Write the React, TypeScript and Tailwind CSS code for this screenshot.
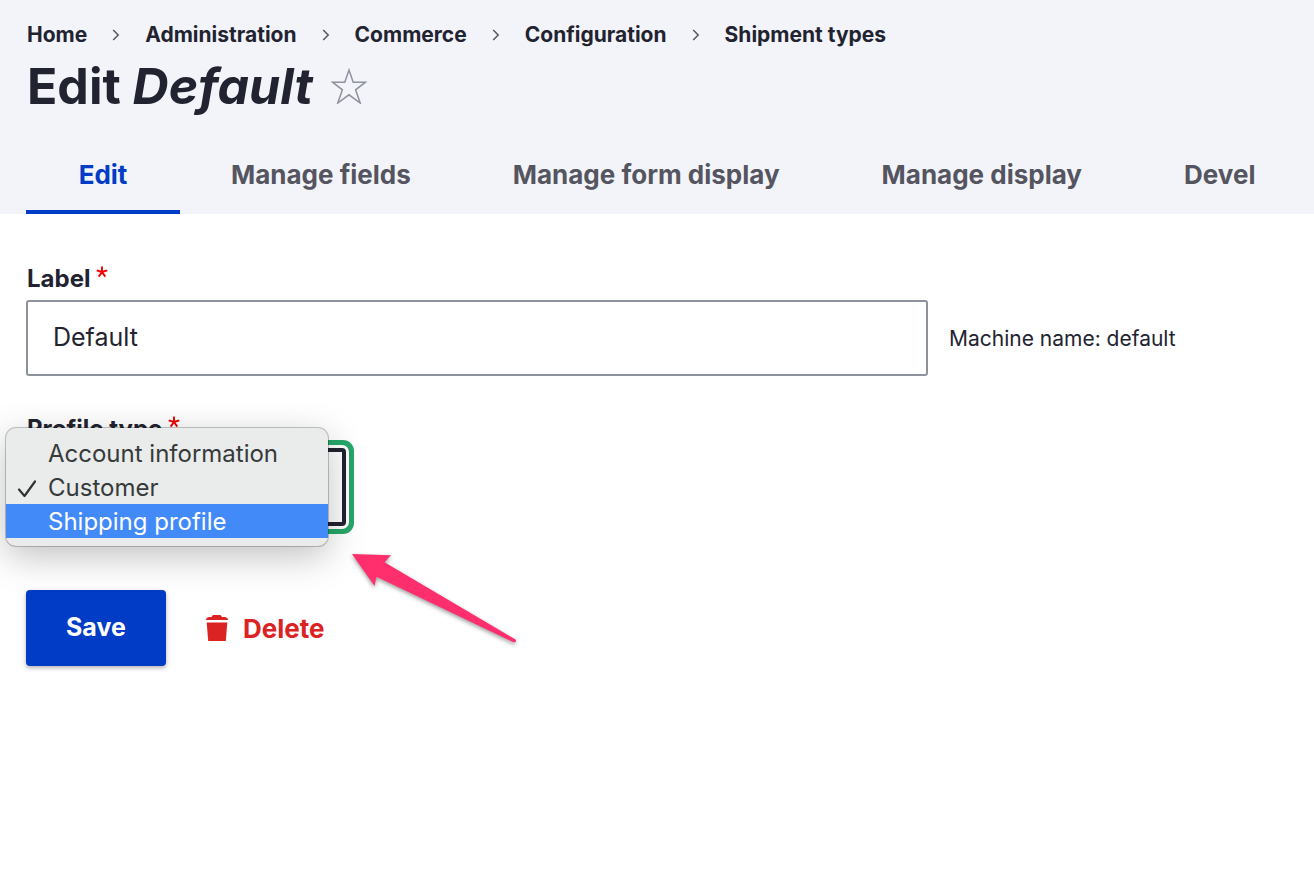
import { Fragment } from "react";

const crumbs = ["Home", "Administration", "Commerce", "Configuration", "Shipment types"];
const tabs = ["Edit", "Manage fields", "Manage form display", "Manage display", "Devel"];
const profileTypes = ["Account information", "Customer", "Shipping profile"];

function Chevron() {
  return (
    <svg className="h-3 w-2 shrink-0" viewBox="0 0 8 12" fill="none" stroke="#55565f" strokeWidth="1.5" aria-hidden="true">
      <path d="M1.2 1 6.2 6 1.2 11" />
    </svg>
  );
}

function Star() {
  return (
    <svg className="size-9" viewBox="0 0 36 36" fill="none" stroke="#8e929c" strokeWidth="1.5" aria-hidden="true">
      <path d="M18 2 22.2 14.2H34.5L24.6 21.8 29.2 35 18 26.8 6.8 35 11.4 21.8 1.5 14.2H13.8Z" />
    </svg>
  );
}

function Trash() {
  return (
    <svg className="h-[26px] w-6 shrink-0" viewBox="0 0 24 26" fill="#dc2323" aria-hidden="true">
      <path d="M8 0H15.5L17 2H20Q23 2.500 23 5H1Q1 2.500 4 2H6.500Z" />
      <path d="M1.700 7.500H22.300L20.800 26H3.200Z" />
    </svg>
  );
}

function Required() {
  return (
    <svg className="mt-1 size-3" viewBox="0 0 12 12" stroke="#f00000" strokeWidth="1.9" aria-hidden="true">
      <path d="M6 6V0.500M6 6 11.300 4.300M6 6 9.300 10.600M6 6 2.700 10.600M6 6 0.700 4.300" />
    </svg>
  );
}

function ProfileMenu() {
  return (
    <ul
      role="listbox"
      aria-label="Profile type"
      className="absolute -top-5 -left-5 z-10 w-[322px] rounded-[10px] bg-[#e9eceb] py-2 text-[24px] leading-8 text-[#363a3a] shadow-[0_0_0_1px_rgba(0,0,0,0.22),0_10px_36px_rgba(0,0,0,0.25)]"
    >
      {profileTypes.map((name) => (
        <li
          key={name}
          role="option"
          aria-selected={name === "Customer"}
          className={
            name === "Shipping profile"
              ? "flex items-center bg-[#428af7] pt-0.5 text-white"
              : "flex items-center pt-0.5"
          }
        >
          <span className="flex w-[42px] justify-center">
            {name === "Customer" && (
              <svg className="h-5 w-5" viewBox="0 0 20 20" fill="none" stroke="#303434" strokeWidth="2.200" strokeLinecap="round" strokeLinejoin="round" aria-hidden="true">
                <path d="M2 11.500 7.500 18 18 3.500" />
              </svg>
            )}
          </span>
          {name}
        </li>
      ))}
    </ul>
  );
}

function Arrow() {
  return (
    <svg
      className="pointer-events-none absolute top-[106px] left-[326px] h-24 w-[172px] drop-shadow-[0_2px_2px_rgba(0,0,0,0.4)]"
      viewBox="0 0 172 96"
      fill="#ff2f6d"
      aria-hidden="true"
    >
      <path d="M0 0 39 1.200 32.500 8.300 163.500 85.500Q165 88 162 88.500L24.500 22.700 22.500 32Z" />
    </svg>
  );
}

export default function App() {
  return (
    <div className="min-h-screen bg-white font-['Inter','Liberation_Sans',sans-serif] text-[#222330]">
      <header className="bg-[#f3f4f9] px-[26px] pt-5">
        <nav aria-label="Breadcrumb" className="flex items-center gap-[25px] pl-px text-[21px] leading-[30px] font-bold">
          {crumbs.map((crumb, i) => (
            <Fragment key={crumb}>
              {i > 0 && <Chevron />}
              <a href="#">{crumb}</a>
            </Fragment>
          ))}
        </nav>
        <div className="flex items-center gap-[18px] pt-[3px] pl-px">
          <h1 className="text-[50px] leading-[66px] font-bold">
            Edit <em>Default</em>
          </h1>
          <button type="button" aria-label="Add to shortcuts">
            <Star />
          </button>
        </div>
        <nav aria-label="Tabs" className="flex pt-[17px] text-center text-[26px] leading-[38px] font-bold">
          {tabs.map((tab) => (
            <a
              key={tab}
              href="#"
              className={
                tab === "Edit"
                  ? "min-w-[154px] shrink-0 border-b-4 border-[#003cc5] px-[51px] pt-5 pb-4 text-[#003cc5]"
                  : "min-w-[154px] shrink-0 border-b-4 border-transparent px-[51px] pt-5 pb-4 whitespace-nowrap text-[#545560]"
              }
            >
              {tab}
            </a>
          ))}
        </nav>
      </header>

      <form className="px-[26px] pt-12" onSubmit={(e) => e.preventDefault()}>
        <label htmlFor="label" className="flex gap-1.5 pb-1 pl-px text-[24px] leading-[34px] font-bold">
          Label <Required />
        </label>
        <div className="flex items-center gap-[21px]">
          <input
            id="label"
            type="text"
            defaultValue="Default"
            className="h-[76px] w-[902px] min-w-0 rounded-[3px] border-2 border-[#8e929c] bg-white px-[25px] pb-0.5 text-[25px] outline-none"
          />
          <p className="pt-0.5 text-[21px] leading-8 whitespace-nowrap">Machine name: default</p>
        </div>

        <label htmlFor="profile" className="flex gap-1.5 pt-9 pb-0.5 pl-px text-[24px] leading-[34px] font-bold">
          Profile type <Required />
        </label>
        <div className="relative w-80">
          <select
            id="profile"
            defaultValue="Customer"
            className="block h-[78px] w-full appearance-none rounded-[4px] border-4 border-[#222330] bg-white px-5 text-[25px] shadow-[0_0_0_3px_#fff,0_0_0_8px_#26a769] outline-none"
          >
            {profileTypes.map((name) => (
              <option key={name}>{name}</option>
            ))}
          </select>
          <ProfileMenu />
          <Arrow />
        </div>

        <div className="flex items-center gap-[39px] pt-16">
          <button
            type="submit"
            className="h-[76px] rounded-[4px] bg-[#003cc5] px-10 text-[25px] font-bold text-white shadow-[0_2px_4px_rgba(0,0,0,0.3)]"
          >
            Save
          </button>
          <a href="#" className="flex items-center gap-3.5 text-[26px] leading-9 font-bold text-[#dc2323]">
            <Trash />
            <span className="pt-0.5">Delete</span>
          </a>
        </div>
      </form>
    </div>
  );
}
